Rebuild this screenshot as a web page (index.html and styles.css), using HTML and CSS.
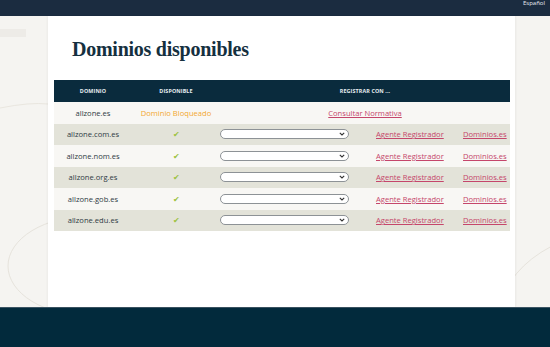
FILE: index.html
```html
<!DOCTYPE html>
<html lang="es">
<head>
<meta charset="utf-8">
<link rel="stylesheet" href="styles.css">
</head>
<body>
<header class="topbar"><span class="lang">Español</span></header>
<div class="stage">
  <svg class="deco" width="550" height="291" viewBox="0 0 550 291" aria-hidden="true">
    <ellipse cx="90" cy="250" rx="82" ry="50" fill="none" stroke="#e6e3dc" stroke-width="1"/>
    <ellipse cx="640" cy="300" rx="140" ry="90" fill="none" stroke="#e6e3dc" stroke-width="1"/>
    <path d="M0 92 Q 30 86 48 88" fill="none" stroke="#e9e6df" stroke-width="1"/>
  </svg>
  <aside class="side-left"><div class="side-bar"></div></aside>
  <main class="panel">
    <h1 class="title">Dominios disponibles</h1>
    <table class="domains">
      <colgroup>
        <col class="c1"><col class="c2"><col class="c3"><col class="c4"><col class="c5">
      </colgroup>
      <thead>
        <tr><th>DOMINIO</th><th>DISPONIBLE</th><th colspan="3">REGISTRAR CON ...</th></tr>
      </thead>
      <tbody>
        <tr class="light">
          <td class="dom">allzone.es</td>
          <td class="blocked">Dominio Bloqueado</td>
          <td colspan="3" class="center"><a href="#" class="link">Consultar Normativa</a></td>
        </tr>
        <tr class="dark">
          <td class="dom">allzone.com.es</td>
          <td class="ok">✔</td>
          <td><select class="sel"><option></option></select></td>
          <td><a href="#" class="link">Agente Registrador</a></td>
          <td><a href="#" class="link">Dominios.es</a></td>
        </tr>
        <tr class="light">
          <td class="dom">allzone.nom.es</td>
          <td class="ok">✔</td>
          <td><select class="sel"><option></option></select></td>
          <td><a href="#" class="link">Agente Registrador</a></td>
          <td><a href="#" class="link">Dominios.es</a></td>
        </tr>
        <tr class="dark">
          <td class="dom">allzone.org.es</td>
          <td class="ok">✔</td>
          <td><select class="sel"><option></option></select></td>
          <td><a href="#" class="link">Agente Registrador</a></td>
          <td><a href="#" class="link">Dominios.es</a></td>
        </tr>
        <tr class="light">
          <td class="dom">allzone.gob.es</td>
          <td class="ok">✔</td>
          <td><select class="sel"><option></option></select></td>
          <td><a href="#" class="link">Agente Registrador</a></td>
          <td><a href="#" class="link">Dominios.es</a></td>
        </tr>
        <tr class="dark">
          <td class="dom">allzone.edu.es</td>
          <td class="ok">✔</td>
          <td><select class="sel"><option></option></select></td>
          <td><a href="#" class="link">Agente Registrador</a></td>
          <td><a href="#" class="link">Dominios.es</a></td>
        </tr>
      </tbody>
    </table>
  </main>
  <aside class="side-right"></aside>
</div>
<footer class="footer"></footer>
</body>
</html>
```
FILE: styles.css
```css
* { box-sizing: border-box; }
html, body { margin: 0; padding: 0; }
body {
  width: 550px;
  height: 347px;
  overflow: hidden;
  background: #f5f4f1;
  font-family: "Open Sans", Lato, "Noto Sans", "Liberation Sans", sans-serif;
  color: #2f3a42;
}
.topbar {
  height: 16px;
  background: #1b2c40;
  position: relative;
  overflow: hidden;
}
.lang {
  position: absolute;
  right: 5px;
  top: 0;
  font-size: 6px;
  line-height: 7px;
  color: #e8edf2;
}
.stage {
  position: relative;
  height: 291px;
  display: flex;
}
.deco { position: absolute; left: 0; top: 0; }
.side-left {
  position: relative;
  width: 48px;
  padding-top: 13px;
}
.side-bar {
  width: 26px;
  height: 8px;
  background: #edebe7;
}
.side-right { flex: 1; position: relative; }
.panel {
  position: relative;
  width: 467px;
  background: #ffffff;
  padding: 20px 5px 0 6px;
  box-shadow: 1px 0 2px rgba(0,0,0,0.05), -1px 0 2px rgba(0,0,0,0.04);
}
.title {
  margin: 0 0 0 18px;
  height: 44px;
  font-family: "Liberation Serif", "DejaVu Serif", serif;
  font-weight: bold;
  font-size: 20px;
  line-height: 26px;
  color: #15303f;
  letter-spacing: -0.25px;
}
.domains {
  width: 456px;
  border-collapse: collapse;
  table-layout: fixed;
}
.c1 { width: 78px; }
.c2 { width: 88px; }
.c3 { width: 156px; }
.c4 { width: 87px; }
.c5 { width: 47px; }
.domains th {
  height: 22px;
  padding: 0;
  background: #0a2b3d;
  color: #e6edf1;
  font-size: 5.4px;
  font-weight: 700;
  text-align: center;
  letter-spacing: 0.1px;
}
.domains td {
  height: 21.5px;
  padding: 0;
  font-size: 7.6px;
  vertical-align: middle;
  white-space: nowrap;
}
.light td { background: #f8f7f4; }
.dark td { background: #e3e3d9; }
.dom { text-align: center; color: #2f3b44; }
.blocked { text-align: center; color: #f3a731; }
.ok { text-align: center; color: #9cc23f; font-size: 8px; }
.center { text-align: center; }
.link { color: #c5466b; text-decoration: underline; }
.sel {
  display: block;
  width: 129px;
  height: 10px;
  margin: 0;
  padding: 0;
  border: 1px solid #8d9296;
  border-radius: 5px;
  background: #ffffff url("data:image/svg+xml,%3Csvg xmlns='http://www.w3.org/2000/svg' width='6' height='4' viewBox='0 0 6 4'%3E%3Cpath d='M0.8 0.8 L3 3 L5.2 0.8' fill='none' stroke='%23333' stroke-width='1.1'/%3E%3C/svg%3E") no-repeat right 3px center;
  -webkit-appearance: none;
  appearance: none;
  font-size: 6px;
}
.footer {
  height: 40px;
  background: #022a3c;
  border-top: 1px solid #3b5463;
}
```
